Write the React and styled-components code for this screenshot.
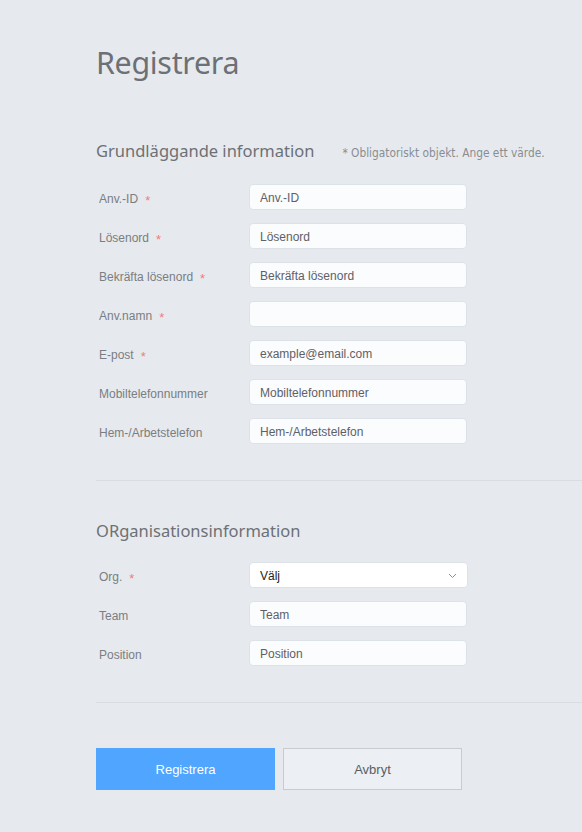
import React from "react";
import styled, { createGlobalStyle } from "styled-components";

const GlobalStyle = createGlobalStyle`
  html, body {
    margin: 0;
    padding: 0;
    background: #e6eaee;
  }
  body {
    font-family: "Liberation Sans", Arial, sans-serif;
  }
`;

// styles
const PageStyle = styled.div`
  min-height: 832px;
  padding: 44px 0 0 96px;
  box-sizing: border-box;
  background: #e6eaee;
`;

const TitleStyle = styled.h1`
  margin: 0;
  font-family: "Noto Sans", "Open Sans", sans-serif;
  font-weight: 400;
  font-size: 30.4px;
  line-height: 38px;
  color: #6d7075;
  letter-spacing: -0.3px;
`;

const SectionStyle = styled.section`
  margin-top: ${(p) => p.$top}px;
`;

const SectionHeadStyle = styled.div`
  display: flex;
  align-items: baseline;
  gap: 28px;
  margin-bottom: ${(p) => p.$gap}px;
`;

const SectionTitleStyle = styled.h2`
  margin: 0;
  font-family: "Noto Sans", "Open Sans", sans-serif;
  font-weight: 400;
  font-size: 16.5px;
  line-height: 24px;
  color: #6d7075;
`;

const NoteStyle = styled.span`
  font-family: "DejaVu Sans Condensed", "DejaVu Sans", sans-serif;
  font-size: 11.8px;
  color: #8a8d92;
`;

const RowsStyle = styled.div`
  display: flex;
  flex-direction: column;
  gap: 13px;
`;

const RowStyle = styled.div`
  display: flex;
  align-items: center;
`;

const LabelStyle = styled.label`
  width: 150px;
  padding: 3px 0 0 3px;
  font-size: 12px;
  color: #7a7d82;
  display: flex;
  align-items: center;
  gap: 7px;
`;

const RequiredStyle = styled.span`
  color: #f47b7b;
  font-size: 13px;
  line-height: 1;
  margin-top: 3px;
`;

const InputStyle = styled.input`
  width: 218px;
  height: 26px;
  box-sizing: border-box;
  padding: 1px 10px 0;
  border: 1px solid #dde2e8;
  border-radius: 4px;
  background: #fbfcfd;
  font-family: "Liberation Sans", Arial, sans-serif;
  font-size: 12px;
  color: #555a60;
  outline: none;
  &::placeholder {
    color: #5d6167;
  }
`;

const SelectBoxStyle = styled.div`
  width: 219px;
  height: 26px;
  box-sizing: border-box;
  padding: 1px 10px 0;
  border: 1px solid #dde2e8;
  border-radius: 4px;
  background: #ffffff;
  display: flex;
  align-items: center;
  justify-content: space-between;
  font-size: 12px;
  color: #222;
`;

const DividerStyle = styled.hr`
  margin: ${(p) => p.$top}px 0 0 0;
  border: none;
  border-top: 1px solid #d8dde2;
  height: 0;
`;

const ButtonRowStyle = styled.div`
  display: flex;
  gap: 8px;
  margin-top: 45px;
`;

const ButtonStyle = styled.button`
  width: 179px;
  height: 42px;
  box-sizing: border-box;
  font-family: "Liberation Sans", Arial, sans-serif;
  font-size: 13px;
  cursor: pointer;
  border: ${(p) => (p.$primary ? "none" : "1px solid #c8ccd1")};
  background: ${(p) => (p.$primary ? "#50a5ff" : "#eceff3")};
  color: ${(p) => (p.$primary ? "#ffffff" : "#5a5e64")};
`;

// data
const BASIC_FIELDS = [
  { label: "Anv.-ID", required: true, placeholder: "Anv.-ID" },
  { label: "Lösenord", required: true, placeholder: "Lösenord" },
  { label: "Bekräfta lösenord", required: true, placeholder: "Bekräfta lösenord" },
  { label: "Anv.namn", required: true, placeholder: "" },
  { label: "E-post", required: true, placeholder: "example@email.com" },
  { label: "Mobiltelefonnummer", required: false, placeholder: "Mobiltelefonnummer" },
  { label: "Hem-/Arbetstelefon", required: false, placeholder: "Hem-/Arbetstelefon" },
];

const ORG_FIELDS = [
  { label: "Team", placeholder: "Team" },
  { label: "Position", placeholder: "Position" },
];

const Label = ({ text, required }) => (
  <LabelStyle>
    {text}
    {required && <RequiredStyle>*</RequiredStyle>}
  </LabelStyle>
);

const Chevron = () => (
  <svg width="9" height="6" viewBox="0 0 9 6" fill="none">
    <path d="M1 1l3.5 3.5L8 1" stroke="#8a8d92" strokeWidth="1" />
  </svg>
);

const App = () => {
  return (
    <>
      <GlobalStyle />
      <PageStyle>
        <TitleStyle>Registrera</TitleStyle>

        <SectionStyle $top={57}>
          <SectionHeadStyle $gap={21}>
            <SectionTitleStyle>Grundläggande information</SectionTitleStyle>
            <NoteStyle>* Obligatoriskt objekt. Ange ett värde.</NoteStyle>
          </SectionHeadStyle>
          <RowsStyle>
            {BASIC_FIELDS.map((field, index) => (
              <RowStyle key={index}>
                <Label text={field.label} required={field.required} />
                <InputStyle placeholder={field.placeholder} />
              </RowStyle>
            ))}
          </RowsStyle>
        </SectionStyle>

        <DividerStyle $top={36} />

        <SectionStyle $top={38}>
          <SectionHeadStyle $gap={19}>
            <SectionTitleStyle>ORganisationsinformation</SectionTitleStyle>
          </SectionHeadStyle>
          <RowsStyle>
            <RowStyle>
              <Label text="Org." required />
              <SelectBoxStyle>
                <span>Välj</span>
                <Chevron />
              </SelectBoxStyle>
            </RowStyle>
            {ORG_FIELDS.map((field, index) => (
              <RowStyle key={index}>
                <Label text={field.label} />
                <InputStyle placeholder={field.placeholder} />
              </RowStyle>
            ))}
          </RowsStyle>
        </SectionStyle>

        <DividerStyle $top={36} />

        <ButtonRowStyle>
          <ButtonStyle $primary>Registrera</ButtonStyle>
          <ButtonStyle>Avbryt</ButtonStyle>
        </ButtonRowStyle>
      </PageStyle>
    </>
  );
};

export default App;
